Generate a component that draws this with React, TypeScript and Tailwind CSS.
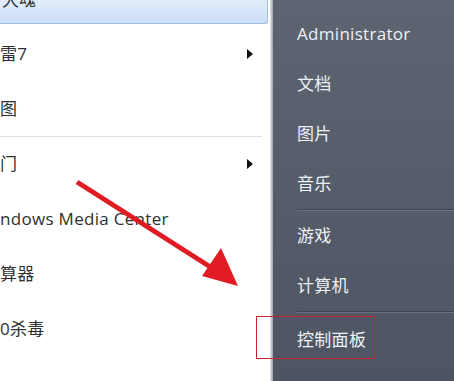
import React from "react";

const leftItems = [
  { label: "雷7", arrow: true },
  { label: "图", arrow: false },
];
const leftItems2 = [
  { label: "门", arrow: true },
  { label: "ndows Media Center", arrow: false },
  { label: "算器", arrow: false },
  { label: "0杀毒", arrow: false },
];

function Arrow() {
  return (
    <svg width="8" height="12" viewBox="0 0 8 12" className="shrink-0">
      <path d="M1 1 L7 6 L1 11 Z" fill="#111" />
    </svg>
  );
}

function LeftRow({ label, arrow }: { label: string; arrow: boolean }) {
  return (
    <div className="flex h-[55px] items-center justify-between pr-[16px]">
      <span className="text-[17px] tracking-[0.3px] text-[#303030]">{label}</span>
      {arrow ? <Arrow /> : null}
    </div>
  );
}

function RightRow({ label }: { label: string }) {
  return (
    <div className="flex h-[50px] items-center pl-[24px] text-[17px] tracking-[0.3px] text-[#eef1f4]">
      {label}
    </div>
  );
}

export default function App() {
  return (
    <div
      className="relative flex h-[381px] w-[454px] overflow-hidden bg-white"
      style={{ fontFamily: '"Open Sans", "Noto Sans CJK SC", sans-serif' }}
    >
      <div className="flex w-[270px] flex-col bg-white">
        <div className="mr-[2px] flex h-[24px] items-start overflow-hidden rounded-br-[3px] border-b border-r border-[#9fc0e6] bg-gradient-to-b from-[#e3eefb] to-[#c9ddf6]">
          <span className="-mt-[9px] pl-[2px] text-[17px] leading-[17px] text-[#303030]">大魂</span>
        </div>
        <div className="pt-[2px]">
          {leftItems.map((it) => (
            <LeftRow key={it.label} label={it.label} arrow={it.arrow} />
          ))}
        </div>
        <div className="mr-[8px] h-px bg-[#dde2e8]" />
        <div className="-mt-[1px]">
          {leftItems2.map((it) => (
            <LeftRow key={it.label} label={it.label} arrow={it.arrow} />
          ))}
        </div>
      </div>
      <div className="w-[3px] bg-gradient-to-r from-[#e6eaee] to-[#9aa1ab]" />
      <div className="flex flex-1 flex-col bg-gradient-to-b from-[#5d6472] to-[#4e5562] pt-[9px]">
        <RightRow label="Administrator" />
        <RightRow label="文档" />
        <RightRow label="图片" />
        <RightRow label="音乐" />
        <div className="ml-[24px] h-[2px] border-t border-[#3f4551] bg-[#6a717e]" />
        <RightRow label="游戏" />
        <RightRow label="计算机" />
        <div className="ml-[24px] h-[2px] border-t border-[#3f4551] bg-[#6a717e]" />
        <div className="pt-[2px]">
          <RightRow label="控制面板" />
        </div>
      </div>

      <div className="absolute left-[256px] top-[316px] h-[43px] w-[120px] border-[1.5px] border-[#c8262c]" />
      <svg className="absolute left-0 top-0" width="454" height="381" viewBox="0 0 454 381">
        <line x1="77" y1="182" x2="212" y2="268" stroke="#e01b22" strokeWidth="5" />
        <polygon points="238,286 202,276 221,248" fill="#e01b22" />
      </svg>
    </div>
  );
}
